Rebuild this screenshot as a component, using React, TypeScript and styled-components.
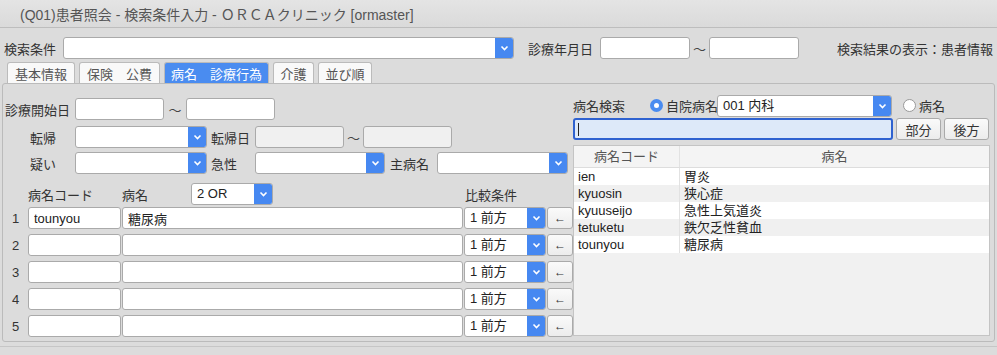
import React from 'react';
import styled, { createGlobalStyle } from 'styled-components'

const GlobalStyle = createGlobalStyle`
  body {
    margin: 0;
    background: #dcdcdc;
    font-family: "Liberation Sans", "Noto Sans CJK JP", sans-serif;
    font-size: 13px;
    color: #333;
  }
`

const Window = styled.div`
  width: 997px;
  height: 355px;
  overflow: hidden;
  background: #dcdcdc;
`

const TitleBar = styled.div`
  height: 28px;
  box-sizing: border-box;
  padding-left: 20px;
  display: flex;
  align-items: center;
  background: linear-gradient(#e4e4e4, #dadada);
  border-bottom: 1px solid #bdbdbd;
  color: #555;
  font-size: 14px;
`

const TopRow = styled.div`
  display: flex;
  align-items: center;
  height: 22px;
  margin-top: 9px;
  padding: 0 4px;
`

const Label = styled.span<{ $w?: number; $pl?: number }>`
  display: inline-block;
  width: ${p => (p.$w ? `${p.$w}px` : 'auto')};
  padding-left: ${p => p.$pl ?? 0}px;
  box-sizing: border-box;
  white-space: nowrap;
  color: #333;
  flex-shrink: 0;
`

const Tilde = styled.span<{ $w?: number }>`
  width: ${p => p.$w ?? 22}px;
  text-align: center;
  color: #444;
  flex-shrink: 0;
`

const Field = styled.input<{ $w: number }>`
  width: ${p => p.$w}px;
  height: 22px;
  box-sizing: border-box;
  border: 1px solid #aaa;
  border-radius: 3px;
  background: #fff;
  padding: 0 5px;
  font: inherit;
  color: #222;
  outline: none;
  flex-shrink: 0;
  &:disabled {
    background: #f0f0f0;
  }
`

const SelectBox = styled.div<{ $w: number }>`
  width: ${p => p.$w}px;
  height: 22px;
  box-sizing: border-box;
  display: flex;
  border: 1px solid #aaa;
  border-radius: 3px;
  background: #fff;
  overflow: hidden;
  flex-shrink: 0;
`

const SelectText = styled.span`
  flex: 1;
  padding-left: 5px;
  line-height: 20px;
  color: #222;
  white-space: nowrap;
`

const SelectButton = styled.span`
  width: 18px;
  background: #4688f1;
  display: flex;
  align-items: center;
  justify-content: center;
`

const Spacer = styled.div`
  flex: 1;
`

const TabBar = styled.div`
  display: flex;
  gap: 4px;
  margin-top: 3px;
  padding-left: 7px;
  height: 21px;
`

const Tab = styled.div<{ $w: number; $active?: boolean }>`
  width: ${p => p.$w}px;
  box-sizing: border-box;
  border: 1px solid #bbb;
  border-bottom: none;
  border-radius: 3px 3px 0 0;
  background: ${p => (p.$active ? '#4a8cf0' : '#f9f9f9')};
  color: ${p => (p.$active ? '#fff' : '#555')};
  display: flex;
  align-items: center;
  justify-content: center;
  white-space: pre;
`

const Panel = styled.div`
  margin: 0 2px;
  height: 259px;
  box-sizing: border-box;
  border: 1px solid #bbb;
  border-radius: 3px;
  display: grid;
  grid-template-columns: 570px 1fr;
`

const LeftCol = styled.div`
  padding: 14px 0 0 2px;
`

const FormRow = styled.div<{ $mt?: number }>`
  display: flex;
  align-items: center;
  height: 22px;
  margin-top: ${p => p.$mt ?? 0}px;
`

const ListHead = styled.div`
  display: flex;
  align-items: center;
  height: 24px;
  margin-top: 8px;
`

const ListBody = styled.div`
  display: flex;
  flex-direction: column;
  gap: 5px;
  margin-top: 1px;
`

const ListRow = styled.div`
  display: flex;
  align-items: center;
  gap: 1px;
  height: 22px;
`

const RowNo = styled.span`
  width: 22px;
  padding-left: 7px;
  box-sizing: border-box;
  color: #333;
`

const ArrowButton = styled.button`
  width: 26px;
  height: 22px;
  box-sizing: border-box;
  border: 1px solid #aaa;
  border-radius: 3px;
  background: linear-gradient(#fafafa, #ececec);
  font: inherit;
  font-size: 12px;
  color: #333;
  padding: 0;
`

const RightCol = styled.div`
  padding: 10px 0 0 0;
  display: flex;
  flex-direction: column;
`

const SearchHead = styled.div`
  display: flex;
  align-items: center;
  height: 23px;
`

const Radio = styled.span<{ $on?: boolean }>`
  width: 13px;
  height: 13px;
  box-sizing: border-box;
  border-radius: 50%;
  border: ${p => (p.$on ? '4px solid #4a8cf0' : '1px solid #999')};
  background: #fff;
  margin-right: 3px;
  flex-shrink: 0;
`

const SearchRow = styled.div`
  display: flex;
  align-items: center;
  gap: 3px;
  height: 22px;
  margin-top: 1px;
`

const SearchField = styled.div`
  width: 320px;
  height: 22px;
  box-sizing: border-box;
  border: 2px solid #2f62d0;
  border-radius: 3px;
  background: #dde9f9;
  display: flex;
  align-items: center;
  padding-left: 3px;
`

const Caret = styled.span`
  width: 1px;
  height: 13px;
  background: #222;
`

const PlainButton = styled.button`
  width: 45px;
  height: 22px;
  box-sizing: border-box;
  border: 1px solid #aaa;
  border-radius: 3px;
  background: linear-gradient(#fafafa, #ececec);
  font: inherit;
  color: #333;
  padding: 0;
`

const ResultTable = styled.div`
  margin-top: 5px;
  width: 417px;
  height: 191px;
  box-sizing: border-box;
  border: 1px solid #c4c4c4;
  background: #f1f1f1;
`

const TableLine = styled.div<{ $head?: boolean; $alt?: boolean }>`
  display: grid;
  grid-template-columns: 105px 1fr;
  height: ${p => (p.$head ? 21 : 17)}px;
  line-height: ${p => (p.$head ? 21 : 17)}px;
  background: ${p => (p.$head ? '#f4f4f4' : p.$alt ? '#f0f0f0' : '#fff')};
  border-bottom: ${p => (p.$head ? '1px solid #ddd' : 'none')};
  color: ${p => (p.$head ? '#555' : '#222')};
  span {
    display: block;
    padding: 0 4px;
    overflow: hidden;
    white-space: nowrap;
    text-align: ${p => (p.$head ? 'center' : 'left')};
  }
  span + span {
    border-left: 1px solid #e2e2e2;
  }
`

const BottomLine = styled.div`
  margin-top: 4px;
  border-top: 1px solid #c6c6c6;
`

const Chevron = () => (
  <svg width="9" height="6" viewBox="0 0 9 6">
    <path d="M1.5 1.5 L4.5 4.5 L7.5 1.5" fill="none" stroke="#fff" strokeWidth="1.6" />
  </svg>
)

function Select({ w, value }: { w: number; value?: string }) {
  return (
    <SelectBox $w={w}>
      <SelectText>{value}</SelectText>
      <SelectButton><Chevron /></SelectButton>
    </SelectBox>
  )
}

const results = [
  ['ien', '胃炎'],
  ['kyuosin', '狭心症'],
  ['kyuuseijo', '急性上気道炎'],
  ['tetuketu', '鉄欠乏性貧血'],
  ['tounyou', '糖尿病'],
]

function App() {
  return (
    <Window>
      <GlobalStyle />
      <TitleBar>(Q01)患者照会 - 検索条件入力 - ＯＲＣＡクリニック [ormaster]</TitleBar>
      <TopRow>
        <Label $w={59}>検索条件</Label>
        <Select w={451} />
        <Label $w={86} $pl={14}>診療年月日</Label>
        <Field $w={90} />
        <Tilde $w={19}>～</Tilde>
        <Field $w={90} />
        <Spacer />
        <Label>検索結果の表示：患者情報</Label>
      </TopRow>
      <TabBar>
        <Tab $w={68}>基本情報</Tab>
        <Tab $w={81}>{'保険　公費'}</Tab>
        <Tab $w={105} $active>{'病名　診療行為'}</Tab>
        <Tab $w={41}>介護</Tab>
        <Tab $w={54}>並び順</Tab>
      </TabBar>
      <Panel>
        <LeftCol>
          <FormRow>
            <Label $w={70}>診療開始日</Label>
            <Field $w={89} />
            <Tilde>～</Tilde>
            <Field $w={89} />
          </FormRow>
          <FormRow $mt={6}>
            <Label $w={70} $pl={25}>転帰</Label>
            <Select w={132} />
            <Label $w={48} $pl={4}>転帰日</Label>
            <Field $w={89} disabled />
            <Tilde $w={19}>～</Tilde>
            <Field $w={89} disabled />
          </FormRow>
          <FormRow $mt={4}>
            <Label $w={70} $pl={25}>疑い</Label>
            <Select w={132} />
            <Label $w={48} $pl={4}>急性</Label>
            <Select w={130} />
            <Label $w={52} $pl={5}>主病名</Label>
            <Select w={131} />
          </FormRow>
          <ListHead>
            <Label $w={117} $pl={23}>病名コード</Label>
            <Label $w={69}>病名</Label>
            <Select w={82} value="2 OR" />
            <Label $w={192} />
            <Label>比較条件</Label>
          </ListHead>
          <ListBody>
            {[1, 2, 3, 4, 5].map(n => (
              <ListRow key={n}>
                <RowNo>{n}</RowNo>
                <Field $w={93} defaultValue={n === 1 ? 'tounyou' : ''} />
                <Field $w={341} defaultValue={n === 1 ? '糖尿病' : ''} />
                <Select w={82} value="1 前方" />
                <ArrowButton>←</ArrowButton>
              </ListRow>
            ))}
          </ListBody>
        </LeftCol>
        <RightCol>
          <SearchHead>
            <Label $w={77}>病名検索</Label>
            <Radio $on />
            <Label $w={51}>自院病名</Label>
            <Select w={175} value="001 内科" />
            <Label $w={11} />
            <Radio />
            <Label>病名</Label>
          </SearchHead>
          <SearchRow>
            <SearchField><Caret /></SearchField>
            <PlainButton>部分</PlainButton>
            <PlainButton>後方</PlainButton>
          </SearchRow>
          <ResultTable>
            <TableLine $head>
              <span>病名コード</span>
              <span>病名</span>
            </TableLine>
            {results.map(([code, name], i) => (
              <TableLine key={code} $alt={i % 2 === 1}>
                <span>{code}</span>
                <span>{name}</span>
              </TableLine>
            ))}
          </ResultTable>
        </RightCol>
      </Panel>
      <BottomLine />
    </Window>
  );
}

export default App;
